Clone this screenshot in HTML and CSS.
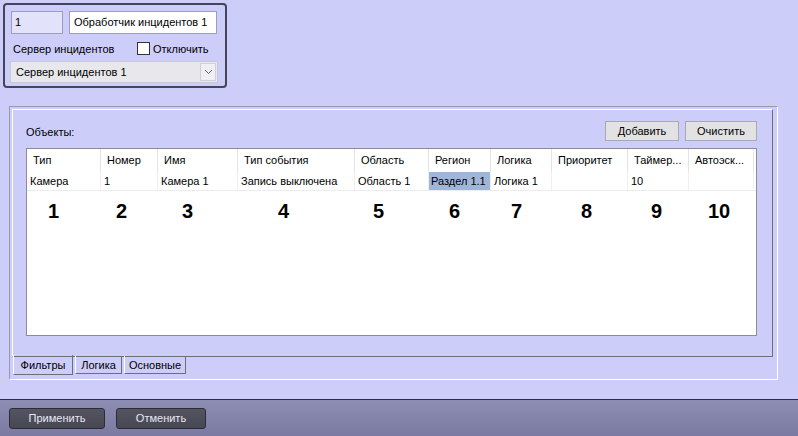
FILE: index.html
```html
<!DOCTYPE html>
<html lang="ru">
<head>
    <meta charset="UTF-8">
    <title>Обработчик инцидентов</title>
    <link rel="stylesheet" href="styles.css">
</head>
<body>
    <div class="window">
        <div class="top-panel">
            <div class="row">
                <div class="field field-id">1</div>
                <div class="field field-name">Обработчик инцидентов 1</div>
            </div>
            <div class="row row-label">
                <span class="label">Сервер инцидентов</span>
                <label class="check"><span class="box"></span>Отключить</label>
            </div>
            <div class="select">
                <span>Сервер инцидентов 1</span>
                <span class="select-arrow">
                    <svg width="9" height="6" viewBox="0 0 9 6"><path d="M1 1 L4.5 4.5 L8 1" fill="none" stroke="#606070" stroke-width="1"/></svg>
                </span>
            </div>
        </div>

        <div class="group">
            <div class="tab-page">
                <div class="objects-bar">
                    <span class="label">Объекты:</span>
                    <div class="buttons">
                        <button class="btn">Добавить</button>
                        <button class="btn">Очистить</button>
                    </div>
                </div>
                <div class="list">
                    <div class="list-row list-head">
                        <div class="cell c1">Тип</div>
                        <div class="cell c2">Номер</div>
                        <div class="cell c3">Имя</div>
                        <div class="cell c4">Тип события</div>
                        <div class="cell c5">Область</div>
                        <div class="cell c6">Регион</div>
                        <div class="cell c7">Логика</div>
                        <div class="cell c8">Приоритет</div>
                        <div class="cell c9">Таймер...</div>
                        <div class="cell c10">Автоэск...</div>
                    </div>
                    <div class="list-row list-data">
                        <div class="cell c1">Камера</div>
                        <div class="cell c2">1</div>
                        <div class="cell c3">Камера 1</div>
                        <div class="cell c4">Запись выключена</div>
                        <div class="cell c5">Область 1</div>
                        <div class="cell c6 selected">Раздел 1.1</div>
                        <div class="cell c7">Логика 1</div>
                        <div class="cell c8"></div>
                        <div class="cell c9">10</div>
                        <div class="cell c10"></div>
                    </div>
                    <span class="mark" style="left: 21px">1</span>
                    <span class="mark" style="left: 89px">2</span>
                    <span class="mark" style="left: 155px">3</span>
                    <span class="mark" style="left: 251px">4</span>
                    <span class="mark" style="left: 346px">5</span>
                    <span class="mark" style="left: 422px">6</span>
                    <span class="mark" style="left: 484px">7</span>
                    <span class="mark" style="left: 554px">8</span>
                    <span class="mark" style="left: 624px">9</span>
                    <span class="mark" style="left: 681px">10</span>
                </div>
            </div>
            <div class="tabs">
                <div class="tab active">Фильтры</div>
                <div class="tab tab-logic">Логика</div>
                <div class="tab tab-main">Основные</div>
            </div>
        </div>

        <div class="bottom-bar">
            <button class="dark-btn">Применить</button>
            <button class="dark-btn">Отменить</button>
        </div>
    </div>
</body>
</html>
```

FILE: styles.css
```css
body {
    margin: 0;
    padding: 0;
    font-family: "Liberation Sans", Arial, sans-serif;
    font-size: 11px;
    color: #000;
    background: #cdcdfa;
}

.window {
    width: 798px;
    height: 436px;
    display: flex;
    flex-direction: column;
    overflow: hidden;
}

/* top panel */
.top-panel {
    margin: 3px 0 0 3px;
    width: 220px;
    height: 81px;
    border: 2px solid #44445a;
    border-radius: 4px;
}

.row {
    display: flex;
    margin: 6px 0 0 6px;
}

.field {
    box-sizing: border-box;
    height: 23px;
    line-height: 21px;
    border: 1px solid #9c9cbc;
    padding: 0 4px;
}

.field-id {
    width: 52px;
    background: #e2e2fa;
    padding-left: 3px;
}

.field-name {
    width: 148px;
    margin-left: 6px;
    background: #fff;
}

.row-label {
    margin: 8px 0 0 8px;
    align-items: center;
    height: 13px;
}

.row-label .label {
    width: 124px;
}

.check {
    display: flex;
    align-items: center;
}

.check .box {
    width: 11px;
    height: 11px;
    border: 1px solid #333;
    background: #fff;
    margin-right: 3px;
}

.select {
    margin: 6px 0 0 5px;
    width: 208px;
    height: 22px;
    box-sizing: border-box;
    background: #e8e8ec;
    border: 1px solid #c8c8d8;
    display: flex;
    align-items: center;
    justify-content: space-between;
    padding-left: 5px;
}

.select-arrow {
    width: 14px;
    height: 16px;
    margin-right: 1px;
    background: #f0f0f2;
    border: 1px solid #d0d0d8;
    display: flex;
    align-items: center;
    justify-content: center;
}

/* main group */
.group {
    margin: 18px 0 0 9px;
    width: 767px;
    height: 272px;
    border: 1px solid;
    border-color: #9898b0 #fff #fff #9898b0;
}

.tab-page {
    margin: 2px 0 0 2px;
    width: 761px;
    height: 248px;
    box-sizing: border-box;
    border: 1px solid;
    border-color: #fff #6e6e7a #6e6e7a #fff;
    padding: 11px 15px 0 13px;
}

.objects-bar {
    display: flex;
    justify-content: space-between;
    align-items: center;
    height: 20px;
}

.objects-bar .label {
    padding-top: 1px;
}

.buttons {
    display: flex;
    gap: 6px;
}

.btn {
    font-family: inherit;
    font-size: 11px;
    height: 20px;
    padding: 0;
    background: #e2e2e4;
    border: 1px solid #a8a8b0;
    color: #000;
}

.btn:first-child {
    width: 74px;
}

.btn:last-child {
    width: 72px;
}

.list {
    margin-top: 7px;
    height: 186px;
    background: #fff;
    border: 1px solid #8c8c98;
    position: relative;
}

.list-row {
    display: flex;
}

.list-head {
    height: 23px;
}

.list-head .cell {
    line-height: 23px;
    padding-left: 6px;
    border-right: 1px solid #e4e4e8;
}

.list-data {
    height: 18px;
    border-bottom: 1px solid #ececf0;
}

.list-data .cell {
    line-height: 19px;
    padding-left: 3px;
    border-right: 1px solid #f0f0f2;
}

.cell {
    box-sizing: border-box;
    white-space: nowrap;
    overflow: hidden;
}

.c1 { width: 74px; }
.c2 { width: 57px; }
.c3 { width: 80px; }
.c4 { width: 117px; }
.c5 { width: 74px; }
.c6 { width: 62px; }
.c7 { width: 61px; }
.c8 { width: 76px; }
.c9 { width: 61px; }
.c10 { width: 65px; }

.list-data .selected {
    background: #9fb6d6;
    padding-left: 2px;
}

.mark {
    position: absolute;
    top: 51px;
    font-size: 20px;
    font-weight: bold;
    line-height: 22px;
}

/* tabs */
.tabs {
    display: flex;
    margin-left: 3px;
    margin-top: -1px;
}

.tab {
    box-sizing: border-box;
    height: 18px;
    line-height: 18px;
    text-align: center;
    border: 1px solid #6e6e7a;
    border-top: none;
    border-left-color: #fff;
    margin-right: 2px;
}

.tab.active {
    width: 60px;
    height: 20px;
    line-height: 20px;
    margin-top: -1px;
}

.tab-logic {
    width: 47px;
}

.tab-main {
    width: 62px;
}

/* bottom */
.bottom-bar {
    margin-top: auto;
    height: 36px;
    border-top: 1px solid #2e2e40;
    background: linear-gradient(#8e8eb4, #7a7aa2);
    display: flex;
    align-items: center;
    gap: 11px;
    padding-left: 9px;
}

.dark-btn {
    font-family: inherit;
    font-size: 11px;
    height: 21px;
    width: 96px;
    border: 1px solid #2c2c38;
    border-radius: 3px;
    background: linear-gradient(#555562, #474752);
    color: #e8e8f4;
    padding: 0;
}

.dark-btn + .dark-btn {
    width: 90px;
}
```
